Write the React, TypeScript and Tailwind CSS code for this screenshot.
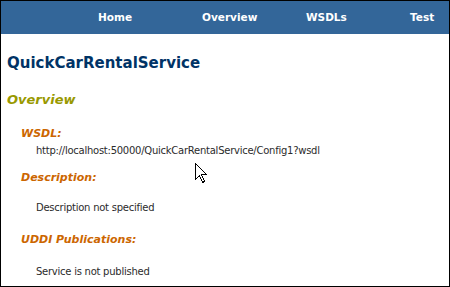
const NAV = ['Home', 'Overview', 'WSDLs', 'Test']

const SECTIONS = [
  { label: 'WSDL:', value: 'http://localhost:50000/QuickCarRentalService/Config1?wsdl', top: 'mt-[19px]', gap: 'mt-[3px]' },
  { label: 'Description:', value: 'Description not specified', top: 'mt-[14px]', gap: 'mt-[16px]' },
  { label: 'UDDI Publications:', value: 'Service is not published', top: 'mt-[19px]', gap: 'mt-[18px]' },
]

function Cursor() {
  return (
    <svg width="13" height="21" viewBox="0 0 13 21" className="absolute left-[194px] top-[162px]">
      <path
        d="M0.5 0.5 L0.5 16.5 L4.5 12.5 L7.5 19.5 L9.5 18.5 L6.5 11.5 L11.5 11.5 Z"
        fill="#fff"
        stroke="#000"
        strokeWidth="1"
        shapeRendering="crispEdges"
      />
    </svg>
  )
}

export default function App() {
  return (
    <div className="relative h-[287px] w-[450px] overflow-hidden border border-black bg-white">
      <div className="flex h-[33px] items-center bg-[#336699] pl-[97px] font-['DejaVu_Sans',sans-serif] text-[10.5px] font-bold text-white">
        {NAV.map(item => (
          <span key={item} className="w-[104px] shrink-0">{item}</span>
        ))}
      </div>

      <h1 className="mt-[20px] pl-[6px] font-['DejaVu_Sans',sans-serif] text-[15px] font-bold leading-[18px] text-[#003366]">
        QuickCarRentalService
      </h1>

      <h2 className="mt-[20px] pl-[6px] font-['DejaVu_Sans',sans-serif] text-[13px] font-bold italic leading-[16px] text-[#999900]">
        Overview
      </h2>

      <div className="pl-[20px]">
        {SECTIONS.map(s => (
          <div key={s.label} className={s.top}>
            <p className="font-['DejaVu_Sans',sans-serif] text-[11px] font-bold italic leading-[14px] text-[#cc6600]">
              {s.label}
            </p>
            <p className={`${s.gap} pl-[15px] font-['DejaVu_Sans',sans-serif] text-[10px] leading-[13px] tracking-[-0.25px] text-[#2b2b2b]`}>
              {s.value}
            </p>
          </div>
        ))}
      </div>

      <Cursor />
    </div>
  )
}
